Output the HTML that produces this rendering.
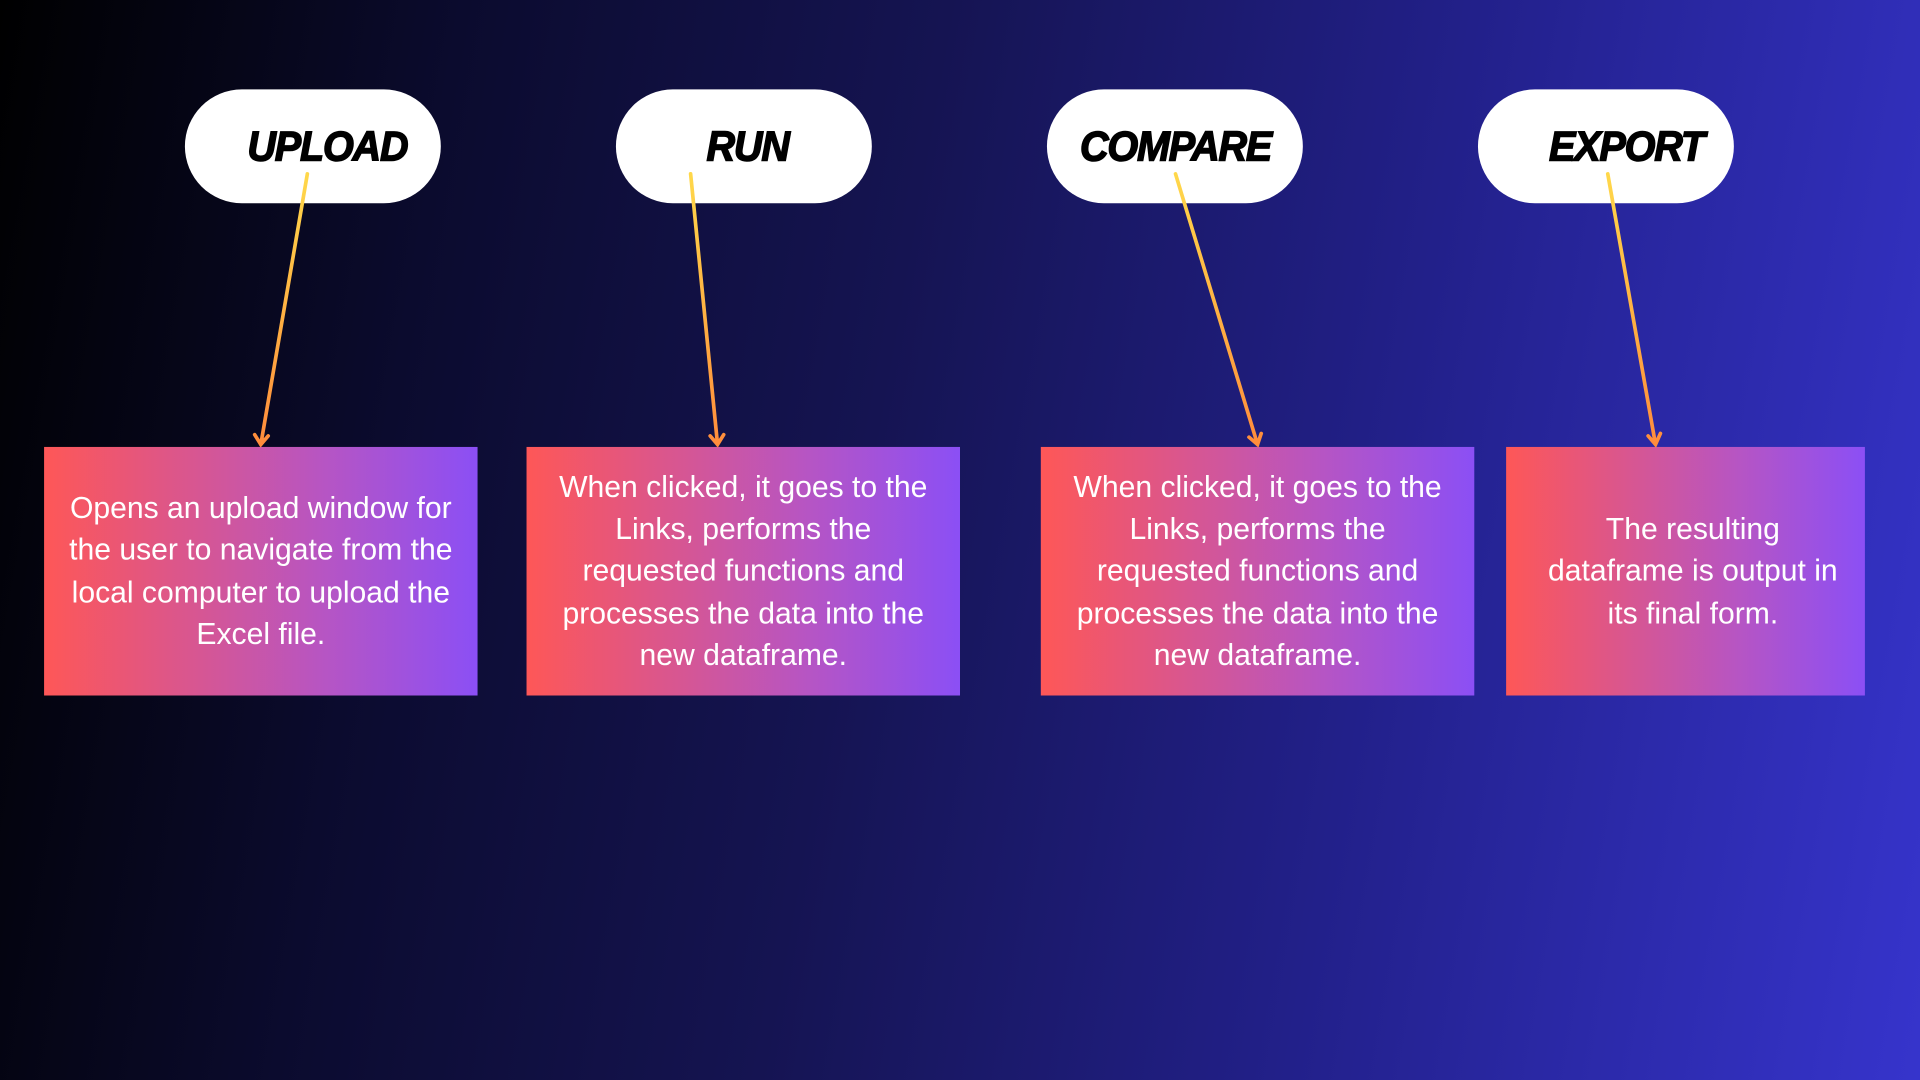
<!DOCTYPE html>
<html><head><style>
html,body{margin:0;padding:0;width:1920px;height:1080px;overflow:hidden;background:#000}
#s{position:absolute;left:0;top:0;width:1568px;height:882px;transform:scale(1.22449);transform-origin:0 0;
background:linear-gradient(100deg,#000 0%,#0b0b2e 22%,#151452 45%,#22208a 70%,#3634cc 100%);font-family:"Liberation Sans",sans-serif}
.p{position:absolute;top:73px;width:209px;height:93px;border-radius:47px;background:#fff}
.p span{position:absolute;top:28px;font-weight:bold;font-style:italic;font-size:34px;color:#000;transform:scaleX(0.95);transform-origin:left;letter-spacing:-1px;white-space:nowrap;-webkit-text-stroke:1.2px #000}
.b{position:absolute;top:365px;height:203px;background:linear-gradient(90deg,#fe5757,#b655c4 65%,#8b4ff5);color:#fff;font-size:24.6px;line-height:34.3px;text-align:center;display:flex;align-items:center;justify-content:center;box-sizing:border-box;padding:0 19px}
svg{position:absolute;left:0;top:0}
</style></head><body><div id="s">
<div class="p" style="left:151px"><span style="left:51px">UPLOAD</span></div>
<div class="p" style="left:503px"><span style="left:74px">RUN</span></div>
<div class="p" style="left:855px"><span style="left:27px">COMPARE</span></div>
<div class="p" style="left:1207px"><span style="left:58px">EXPORT</span></div>
<div class="b" style="left:36px;width:354px;padding:2px 12px 0">Opens an upload window for the user to navigate from the local computer to upload the Excel file.</div>
<div class="b" style="left:430px;width:354px;padding-top:2px">When clicked, it goes to the Links, performs the requested functions and processes the data into the new dataframe.</div>
<div class="b" style="left:850px;width:354px;padding-top:2px">When clicked, it goes to the Links, performs the requested functions and processes the data into the new dataframe.</div>
<div class="b" style="left:1230px;width:293px;padding-left:24px;padding-right:12px;padding-top:2px">The resulting dataframe is output in its final form.</div>
<svg width="1568" height="882">
<defs><linearGradient id="g" x1="0" y1="142" x2="0" y2="364" gradientUnits="userSpaceOnUse"><stop offset="0" stop-color="#ffd84a"/><stop offset="1" stop-color="#ff8c3c"/></linearGradient></defs>
<g stroke="url(#g)" stroke-width="3" fill="none" stroke-linecap="round">
<path d="M251 142L213 363M208 355L213 363L219 356"/>
<path d="M564 142L586 363M580 356L586 363L591 355"/>
<path d="M960 142L1027 363M1020 357L1027 363L1030 354"/>
<path d="M1313 142L1352 363M1346 356L1352 363L1356 354"/>
</g></svg>
</div></body></html>
